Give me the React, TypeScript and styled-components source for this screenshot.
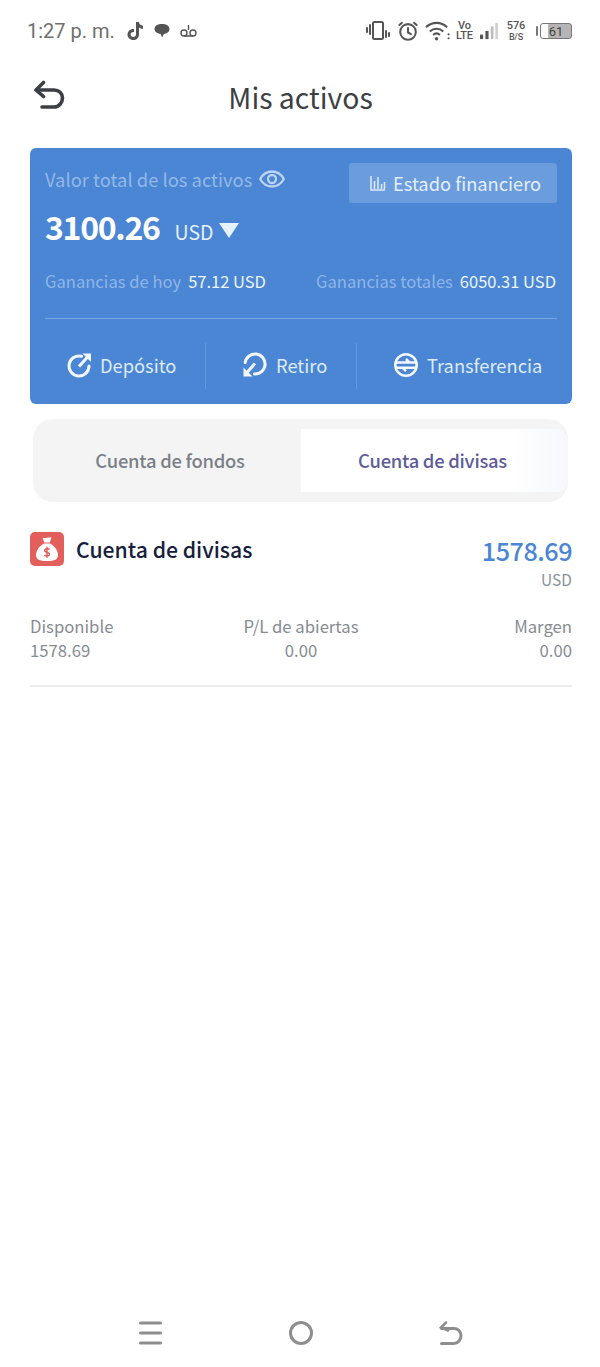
import React from "react";
import styled, { createGlobalStyle } from "styled-components";

const GlobalStyle = createGlobalStyle`
  html, body {
    margin: 0;
    padding: 0;
    background: #fff;
  }
  * {
    box-sizing: border-box;
  }
`;

const CJK = `"Noto Sans CJK SC", "Noto Sans", sans-serif`;

const Page = styled.div`
  width: 600px;
  height: 1367px;
  display: flex;
  flex-direction: column;
  overflow: hidden;
  font-family: ${CJK};
  background: #fff;
`;

const StatusBar = styled.div`
  height: 60px;
  padding: 20px 28px 0 27px;
  display: flex;
  align-items: flex-start;
  justify-content: space-between;
  color: #555;
`;

const StatusGroup = styled.div`
  display: flex;
  align-items: center;
  height: 22px;
`;

const Clock = styled.span`
  font-family: Roboto, sans-serif;
  font-size: 20px;
  line-height: 22px;
  color: #6f6f6f;
  margin-right: 12px;
  white-space: nowrap;
`;

const Stacked = styled.div`
  display: flex;
  flex-direction: column;
  align-items: center;
  font-family: Roboto, sans-serif;
  font-weight: 500;
  color: #555;
  font-size: ${p => p.$size}px;
  line-height: ${p => p.$line}px;
  margin-left: ${p => p.$left}px;
  letter-spacing: -0.2px;
`;

const SmallLine = styled.span`
  font-size: ${p => p.$size}px;
  line-height: ${p => p.$line}px;
`;

const BatteryBody = styled.div`
  width: 32px;
  height: 16px;
  border: 1.5px solid #777;
  border-radius: 3px;
  display: flex;
  align-items: center;
  justify-content: center;
  font-family: Roboto, sans-serif;
  font-size: 13px;
  line-height: 13px;
  color: #444;
  background: linear-gradient(90deg, #fff 0 24%, #b5b5b5 24% 100%);
`;

const BatteryCap = styled.div`
  width: 2px;
  height: 10px;
  background: #777;
  border-radius: 1px;
  margin: 0 2px 0 11px;
`;

const Header = styled.header`
  height: 88px;
  padding: 0 30px 16px 33px;
  display: flex;
  align-items: center;
`;

const Title = styled.h1`
  flex: 1;
  margin: 2px 0 0 -32px;
  padding-right: 2px;
  text-align: center;
  font-size: 28.4px;
  font-weight: 400;
  line-height: 40px;
  color: #3b3f44;
`;

const Card = styled.section`
  margin: 0 28px 0 30px;
  height: 256px;
  background: #4a86d3;
  border-radius: 6px;
  padding: 15px 15px 0;
  display: flex;
  flex-direction: column;
`;

const CardTop = styled.div`
  display: flex;
  justify-content: space-between;
  align-items: flex-start;
`;

const TotalLabel = styled.div`
  display: flex;
  align-items: center;
  gap: 7px;
  font-size: 18.4px;
  line-height: 32px;
  color: #93b8e8;
`;

const StatementButton = styled.div`
  width: 208px;
  height: 40px;
  padding-left: 21px;
  border-radius: 3px;
  background: #6b9ddd;
  display: flex;
  align-items: center;
  gap: 7px;
  font-size: 18.3px;
  color: #e4eefa;
`;

const TotalRow = styled.div`
  display: flex;
  align-items: baseline;
  color: #fff;
`;

const TotalValue = styled.span`
  font-size: 32px;
  font-weight: 700;
  line-height: 46px;
  letter-spacing: -1.3px;
`;

const TotalUnit = styled.span`
  font-size: 19.5px;
  margin-left: 15px;
  color: #e6effa;
`;

const Caret = styled.span`
  width: 0;
  height: 0;
  margin: 9px 0 0 6px;
  border-left: 10px solid transparent;
  border-right: 10px solid transparent;
  border-top: 15px solid #e8f2fb;
  align-self: center;
`;

const EarningsRow = styled.div`
  display: flex;
  justify-content: space-between;
  margin-top: 20px;
  padding: 0 1px 24px 0;
  border-bottom: 1px solid #77a5e0;
`;

const Earning = styled.div`
  display: flex;
  gap: 7px;
  font-size: 16.6px;
  line-height: 25px;
  color: #8fb5e7;
  white-space: nowrap;
`;

const EarningValue = styled.span`
  font-size: 16.5px;
  color: #eef4fc;
`;

const Actions = styled.div`
  display: flex;
  align-items: center;
  height: 46px;
  margin-top: 24px;
`;

const Action = styled.div`
  flex: 0 0 ${p => p.$width}px;
  height: 46px;
  padding: 0 0 2px ${p => p.$inset}px;
  display: flex;
  align-items: center;
  gap: 8px;
  font-size: 18.3px;
  color: #dfeafa;
  white-space: nowrap;
  border-right: ${p => (p.$divider ? "1px solid #6197dc" : "none")};
`;

const Tabs = styled.div`
  margin: 15px 32px 0 33px;
  height: 83px;
  padding: 10px 0;
  background: #f4f4f5;
  border-radius: 20px;
  display: flex;
`;

const Tab = styled.div`
  flex: 0 0 ${p => (p.$active ? 267 : 268)}px;
  padding: ${p => (p.$active ? "0 4px 2px 0" : "0 0 2px 6px")};
  display: flex;
  align-items: center;
  justify-content: center;
  font-size: 18.4px;
  font-weight: 500;
  letter-spacing: -0.25px;
  color: ${p => (p.$active ? "#5d5b98" : "#7b8087")};
  border-radius: ${p => (p.$active ? "0 12px 12px 0" : "0")};
  background: ${p =>
    p.$active
      ? "linear-gradient(90deg, #fff 0 78%, #f5f8fd 100%)"
      : "transparent"};
`;

const Account = styled.section`
  margin: 0 28px 0 30px;
  padding: 30px 0 23px;
  border-bottom: 2px solid #ececee;
`;

const AccountHead = styled.div`
  display: flex;
  justify-content: space-between;
  align-items: flex-start;
`;

const AccountName = styled.div`
  display: flex;
  align-items: center;
  gap: 12px;
  font-size: 21.2px;
  font-weight: 500;
  line-height: 34px;
  color: #16203c;
`;

const IconTile = styled.div`
  width: 34px;
  height: 34px;
  border-radius: 5px;
  background: #e25f5c;
  display: flex;
  align-items: center;
  justify-content: center;
`;

const Balance = styled.div`
  display: flex;
  flex-direction: column;
  align-items: flex-end;
`;

const BalanceValue = styled.span`
  font-size: 25.2px;
  font-weight: 500;
  line-height: 37px;
  letter-spacing: -0.5px;
  color: #4a86d3;
`;

const BalanceUnit = styled.span`
  font-size: 15.5px;
  line-height: 20px;
  color: #8d9299;
`;

const Stats = styled.div`
  display: grid;
  grid-template-columns: 1fr 1fr 1fr;
  margin-top: 25px;
`;

const Stat = styled.div`
  display: flex;
  flex-direction: column;
  align-items: ${p => p.$align};
  font-size: 16.7px;
  line-height: 24px;
  color: #868b92;
`;

const NavBar = styled.nav`
  margin-top: auto;
  height: 67px;
  padding: 0 137px 1px 138px;
  display: flex;
  align-items: center;
  justify-content: space-between;
`;

const StatusIcons = () => (
  <StatusGroup>
    <svg width="24" height="22" viewBox="0 0 24 22" fill="none" stroke="#555">
      <rect x="7" y="2" width="10" height="17" rx="1.5" strokeWidth="2" />
      <path d="M1 8v4M4 5v9" strokeWidth="2" strokeLinecap="round" />
      <path d="M20 11v6M23 13v3" strokeWidth="2" strokeLinecap="round" />
    </svg>
    <svg width="22" height="24" viewBox="0 0 24 24" fill="none" stroke="#555" strokeWidth="2.2" style={{ marginLeft: 7 }}>
      <circle cx="12" cy="13" r="8.5" />
      <path d="M12 8v5.5l4 2.5" />
      <path d="M2 6l4-3.5M22 6l-4-3.5" />
    </svg>
    <svg width="25" height="22" viewBox="0 0 26 22" fill="none" stroke="#555" strokeWidth="2.2" style={{ marginLeft: 6 }}>
      <path d="M1 7c6.5-6 15.5-6 22 0" />
      <path d="M5 11.5c4-3.7 10-3.7 14 0" />
      <path d="M8.5 15c2-1.7 5-1.7 7 0" />
      <circle cx="12" cy="19" r="1.8" fill="#555" stroke="none" />
      <circle cx="24.5" cy="14.5" r="1.1" fill="#555" stroke="none" />
      <circle cx="24.5" cy="18.5" r="1.1" fill="#555" stroke="none" />
    </svg>
    <Stacked $size={11} $line={10.5} $left={6}>
      <span>Vo</span>
      <span>LTE</span>
    </Stacked>
    <svg width="18" height="20" viewBox="0 0 20 20" style={{ marginLeft: 7 }}>
      <rect x="0" y="14" width="3.5" height="5" fill="#555" />
      <rect x="6" y="10" width="3.5" height="9" fill="#555" />
      <rect x="12" y="5" width="3" height="14" fill="#bdbdbd" />
      <rect x="17" y="1" width="3" height="18" fill="#d2d2d2" />
    </svg>
    <Stacked $size={11} $line={12} $left={9}>
      <span>576</span>
      <SmallLine $size={9} $line={10}>B/S</SmallLine>
    </Stacked>
    <BatteryCap />
    <BatteryBody>61</BatteryBody>
  </StatusGroup>
);

const ChartIcon = () => (
  <svg width="16" height="16" viewBox="0 0 16 16" fill="none" stroke="#dbe7f7" strokeWidth="1.6">
    <path d="M1 1v14h14" />
    <path d="M4.5 6v8M8 2v12M11.5 9v5M14.5 7v7" />
  </svg>
);

const EyeIcon = () => (
  <svg width="26" height="18" viewBox="0 0 26 18" fill="none" stroke="#bcd3f1" strokeWidth="2.3">
    <path d="M1.2 9C4 4 8 1.5 13 1.5S22 4 24.8 9C22 14 18 16.5 13 16.5S4 14 1.2 9Z" />
    <circle cx="13" cy="9" r="4" />
  </svg>
);

const DepositIcon = () => (
  <svg width="26" height="26" viewBox="0 0 26 26" fill="none" stroke="#f3f7fd" strokeWidth="3">
    <path d="M15.5 4.3A10 10 0 1 0 23 14" strokeLinecap="round" />
    <path d="M13 14.5l9-10" />
    <path d="M16.5 1.5H25V10z" stroke="none" fill="#f3f7fd" />
  </svg>
);

const WithdrawIcon = () => (
  <svg width="26" height="26" viewBox="0 0 26 26" fill="none" stroke="#f3f7fd" strokeWidth="3">
    <path d="M3.2 10.5A10 10 0 1 1 12.5 22" strokeLinecap="round" />
    <path d="M13 11.5l-9 10" />
    <path d="M1.5 15.5v9h9z" stroke="none" fill="#f3f7fd" />
  </svg>
);

const TransferIcon = () => (
  <svg width="26" height="26" viewBox="0 0 26 26" fill="none" stroke="#f3f7fd" strokeWidth="2.6">
    <circle cx="13" cy="13" r="10.7" />
    <path d="M3 10.5h20M3 15.7h20" />
    <path d="M16.5 10.5 13 7M9.500 15.7l3.500 3.500" />
  </svg>
);

const MoneyBagIcon = () => (
  <svg width="24" height="26" viewBox="0 0 24 26">
    <path fill="#fff" d="M7.5 1.5c1.5 1 3 .2 4.5.2s3-.8 4.500-.2L14.800 6.500H9.200L7.500 1.500Z" />
    <path fill="#fff" d="M9 7.500h6c4.500 2.500 8 7 8 11.500 0 4.500-3.500 6-11 6S1 23.500 1 19c0-4.500 3.500-9 8-11.500Z" />
    <path fill="none" stroke="#e25f5c" strokeWidth="1.5" d="M14.500 13.500c-.6-1-4.500-1.500-4.800.8-.3 2.500 5 1.500 4.800 4-.2 2.300-4 2-5 .7M12 10.800v11" />
  </svg>
);

const App = () => (
  <Page>
    <GlobalStyle />
    <StatusBar>
      <StatusGroup>
        <Clock>1:27 p. m.</Clock>
        <svg width="16" height="18" viewBox="0 0 16 18" fill="#555">
          <path d="M9 0h3c.2 2 1.500 3.500 4 3.700v3c-1.500 0-2.900-.5-4-1.300v7c0 3.400-2.600 5.600-5.700 5.600C3 18 .5 15.600.5 12.500c0-3.400 3-6 6.500-5.500v3.200c-1.800-.5-3.400.7-3.400 2.300 0 1.400 1.200 2.500 2.600 2.500 1.500 0 2.800-1 2.800-2.700V0Z" />
        </svg>
        <svg width="16" height="16" viewBox="0 0 16 16" fill="#555" style={{ marginLeft: 11 }}>
          <path d="M8 1c4.300 0 7.500 1.900 7.500 5 0 2.700-2.400 4.500-5.500 4.900L8 14.500 6.600 10.900C3 10.500.5 8.700.5 6 .5 2.900 3.700 1 8 1Z" />
        </svg>
        <svg width="17" height="14" viewBox="0 0 17 14" fill="none" stroke="#555" strokeWidth="1.4" style={{ marginLeft: 10 }}>
          <circle cx="4" cy="9" r="3" />
          <circle cx="13" cy="9" r="3" />
          <path d="M4 12h9M8.500 1v5" />
        </svg>
      </StatusGroup>
      <StatusIcons />
    </StatusBar>
    <Header>
      <svg width="32" height="32" viewBox="0 0 32 32" fill="none" stroke="#3c3f44" strokeWidth="3.6" strokeLinecap="round" strokeLinejoin="round">
        <path d="M10.500 2.500 3 10l7.500 6.500" />
        <path d="M3.500 10H21c5 0 8.500 3.500 8.500 8s-3.500 9-8.500 9H9" />
      </svg>
      <Title>Mis activos</Title>
    </Header>
    <Card>
      <CardTop>
        <TotalLabel>
          Valor total de los activos
          <EyeIcon />
        </TotalLabel>
        <StatementButton>
          <ChartIcon />
          Estado financiero
        </StatementButton>
      </CardTop>
      <TotalRow>
        <TotalValue>3100.26</TotalValue>
        <TotalUnit>USD</TotalUnit>
        <Caret />
      </TotalRow>
      <EarningsRow>
        <Earning>
          Ganancias de hoy
          <EarningValue>57.12 USD</EarningValue>
        </Earning>
        <Earning>
          Ganancias totales
          <EarningValue>6050.31 USD</EarningValue>
        </Earning>
      </EarningsRow>
      <Actions>
        <Action $width={161} $inset={21} $divider>
          <DepositIcon />
          Depósito
        </Action>
        <Action $width={151} $inset={36} $divider>
          <WithdrawIcon />
          Retiro
        </Action>
        <Action $width={200} $inset={36}>
          <TransferIcon />
          Transferencia
        </Action>
      </Actions>
    </Card>
    <Tabs>
      <Tab>Cuenta de fondos</Tab>
      <Tab $active>Cuenta de divisas</Tab>
    </Tabs>
    <Account>
      <AccountHead>
        <AccountName>
          <IconTile>
            <MoneyBagIcon />
          </IconTile>
          Cuenta de divisas
        </AccountName>
        <Balance>
          <BalanceValue>1578.69</BalanceValue>
          <BalanceUnit>USD</BalanceUnit>
        </Balance>
      </AccountHead>
      <Stats>
        <Stat $align="flex-start">
          <span>Disponible</span>
          <span>1578.69</span>
        </Stat>
        <Stat $align="center">
          <span>P/L de abiertas</span>
          <span>0.00</span>
        </Stat>
        <Stat $align="flex-end">
          <span>Margen</span>
          <span>0.00</span>
        </Stat>
      </Stats>
    </Account>
    <NavBar>
      <svg width="24" height="24" viewBox="0 0 24 24" fill="none" stroke="#8e8e8e" strokeWidth="3" strokeLinecap="round">
        <path d="M2.500 2h20M2.500 12h20M2.500 22h20" />
      </svg>
      <svg width="24" height="24" viewBox="0 0 24 24" fill="none" stroke="#8e8e8e" strokeWidth="3">
        <circle cx="12" cy="12" r="10.5" />
      </svg>
      <svg width="24" height="24" viewBox="0 0 24 24" fill="none" stroke="#8e8e8e" strokeWidth="3" strokeLinecap="round">
        <path d="M2.500 7.500h12.500c4 0 7 3 7 7s-3 8-7 8H2.500" />
        <path d="M7 1.500 2 6.500l7 3" strokeWidth="2.5" />
      </svg>
    </NavBar>
  </Page>
);

export default App;
